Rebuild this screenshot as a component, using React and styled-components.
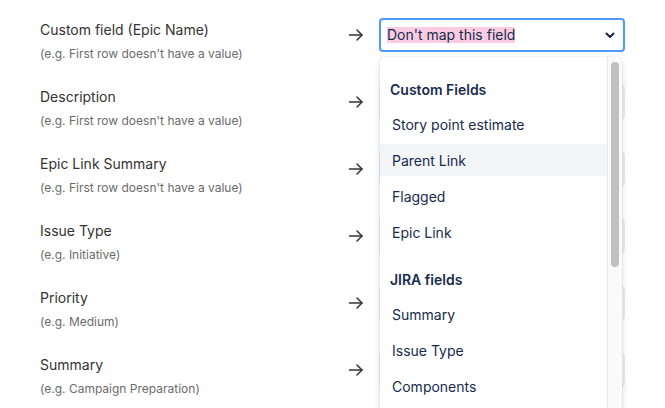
import React from "react";
import styled, { createGlobalStyle } from "styled-components";

const Global = createGlobalStyle`
  html, body { margin: 0; padding: 0; background: #fff; }
  body { font-family: Inter, "Noto Sans", "Liberation Sans", sans-serif; -webkit-font-smoothing: antialiased; }
  * { box-sizing: border-box; }
`;

const Page = styled.div`
  height: 408px;
  overflow: hidden;
  padding: 18px 0 0 40px;
`;

const Row = styled.div`
  display: grid;
  grid-template-columns: 300px 39px 246px;
  height: 67px;
  align-items: start;
`;

const LabelBlock = styled.div`
  padding-top: 2px;
  display: flex;
  flex-direction: column;
  gap: 6px;
`;

const Label = styled.div`
  font-size: 14px;
  line-height: 20px;
  color: #333;
`;

const Hint = styled.div`
  font-size: 12px;
  line-height: 16px;
  color: #6b6b6b;
`;

const ArrowCell = styled.div`
  height: 34px;
  display: flex;
  align-items: center;
  padding-left: 8px;
  color: #333;
`;

const SelectWrap = styled.div`
  position: relative;
`;

const Control = styled.div`
  height: 34px;
  border: 2px solid ${(p) => (p.$focused ? "#4c9aff" : "#ebecf0")};
  background: ${(p) => (p.$focused ? "#fff" : "#fafbfc")};
  border-radius: 4px;
  display: flex;
  align-items: center;
  justify-content: space-between;
  padding: 0 8px 0 6px;
  font-size: 14px;
  color: #172b4d;
`;

const Selected = styled.span`
  background: #f9cce1;
  line-height: 16px;
`;

const Menu = styled.div`
  position: absolute;
  top: calc(100% + 5px);
  left: 1px;
  right: 3px;
  height: 420px;
  background: #fff;
  border-radius: 4px;
  box-shadow: 0 4px 8px -2px rgba(9, 30, 66, 0.25), 0 0 1px rgba(9, 30, 66, 0.31);
  display: flex;
  overflow: hidden;
  z-index: 10;
`;

const MenuList = styled.div`
  flex: 1;
  padding-top: 4px;
`;

const Group = styled.div`
  padding-top: ${(p) => (p.$first ? "19px" : "20px")};
  display: flex;
  flex-direction: column;
`;

const GroupHeading = styled.div`
  font-size: 14px;
  line-height: 20px;
  font-weight: 600;
  color: #172b4d;
  padding: 0 10px;
  margin-bottom: 6px;
`;

const Option = styled.div`
  height: 32px;
  margin: 2px 0;
  padding: 0 12px;
  display: flex;
  align-items: center;
  font-size: 14px;
  color: #172b4d;
  background: ${(p) => (p.$active ? "#f4f5f7" : "transparent")};
`;

const Track = styled.div`
  width: 15px;
  background: #fafafa;
  border-left: 1px solid #e8e8e8;
  padding-top: 5px;
`;

const Thumb = styled.div`
  width: 8px;
  height: 205px;
  margin: 0 auto;
  border-radius: 4px;
  background: #c1c1c1;
`;

const Arrow = () => (
  <svg width="16" height="16" viewBox="0 0 16 16" fill="none" stroke="currentColor" strokeWidth="1.5" strokeLinecap="round" strokeLinejoin="round">
    <path d="M1.5 8h12.5" />
    <path d="M9 3l5 5-5 5" />
  </svg>
);

const Chevron = () => (
  <svg width="10" height="7" viewBox="0 0 10 7" fill="none" stroke="#172b4d" strokeWidth="2" strokeLinecap="round" strokeLinejoin="round">
    <path d="M1.5 1.5l3.5 3.5 3.5-3.5" />
  </svg>
);

const rows = [
  ["Custom field (Epic Name)", "(e.g. First row doesn't have a value)"],
  ["Description", "(e.g. First row doesn't have a value)"],
  ["Epic Link Summary", "(e.g. First row doesn't have a value)"],
  ["Issue Type", "(e.g. Initiative)"],
  ["Priority", "(e.g. Medium)"],
  ["Summary", "(e.g. Campaign Preparation)"],
];

const groups = [
  { title: "Custom Fields", options: ["Story point estimate", "Parent Link", "Flagged", "Epic Link"] },
  { title: "JIRA fields", options: ["Summary", "Issue Type", "Components"] },
];

export default function App() {
  return (
    <>
      <Global />
      <Page>
        {rows.map(([label, hint], i) => (
          <Row key={label}>
            <LabelBlock>
              <Label>{label}</Label>
              <Hint>{hint}</Hint>
            </LabelBlock>
            <ArrowCell>
              <Arrow />
            </ArrowCell>
            <SelectWrap>
              <Control $focused={i === 0}>
                {i === 0 ? <Selected>Don't map this field</Selected> : <span />}
                <Chevron />
              </Control>
              {i === 0 && (
                <Menu>
                  <MenuList>
                    {groups.map((g, gi) => (
                      <Group key={g.title} $first={gi === 0}>
                        <GroupHeading>{g.title}</GroupHeading>
                        {g.options.map((o) => (
                          <Option key={o} $active={o === "Parent Link"}>{o}</Option>
                        ))}
                      </Group>
                    ))}
                  </MenuList>
                  <Track>
                    <Thumb />
                  </Track>
                </Menu>
              )}
            </SelectWrap>
          </Row>
        ))}
      </Page>
    </>
  );
}
